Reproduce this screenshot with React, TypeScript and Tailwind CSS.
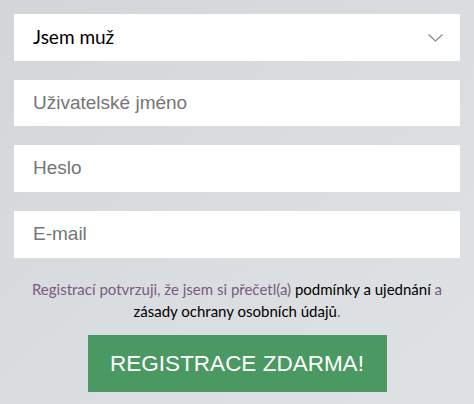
export default function App() {
  return (
    <div className="min-h-[404px] w-full bg-gradient-to-br from-[#d3d6d9] via-[#dadddf] to-[#dfe2e4] px-[14px] pt-[14px]">
      <div className="flex flex-col gap-[19px]">
        <div className="flex h-[47px] items-center justify-between bg-white pl-[19px] pr-[17px]">
          <span className="font-['Lato'] text-[19px] text-black">Jsem muž</span>
          <svg width="15" height="8" viewBox="0 0 15 8" fill="none">
            <path d="M0.5 0.5 L7.5 7 L14.5 0.5" stroke="#8a7f8f" strokeWidth="1.1" />
          </svg>
        </div>
        <div className="flex h-[46px] items-center bg-white pl-[19px]">
          <span className="font-['Liberation_Sans'] text-[19px] text-[#757575]">Uživatelské jméno</span>
        </div>
        <div className="flex h-[47px] items-center bg-white pl-[19px]">
          <span className="font-['Liberation_Sans'] text-[19px] text-[#757575]">Heslo</span>
        </div>
        <div className="flex h-[47px] items-center bg-white pl-[19px]">
          <span className="font-['Liberation_Sans'] text-[19px] text-[#757575]">E-mail</span>
        </div>
      </div>
      <p className="mt-[20px] text-center font-['Lato'] text-[15px] leading-[22px] text-[#7a5a7e]">
        Registrací potvrzuji, že jsem si přečetl(a) <span className="text-black">podmínky a ujednání</span> a
        <br />
        <span className="text-black">zásady ochrany osobních údajů</span>.
      </p>
      <div className="mt-[13px] flex justify-center">
        <button className="h-[57px] w-[299px] bg-[#4a9862] font-['Liberation_Sans'] text-[22.5px] text-white">
          REGISTRACE ZDARMA!
        </button>
      </div>
    </div>
  )
}
